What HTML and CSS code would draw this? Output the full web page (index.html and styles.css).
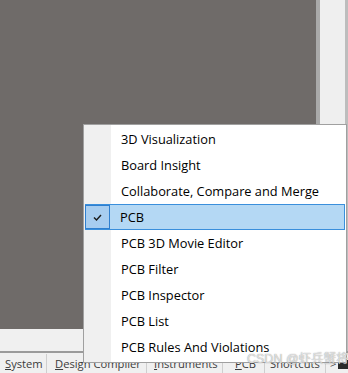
FILE: index.html
```html
<!DOCTYPE html>
<html>
<head>
<meta charset="utf-8">
<link rel="stylesheet" href="styles.css">
</head>
<body>
<div class="app">
  <div class="workspace">
    <div class="main">
      <div class="canvas"></div>
      <div class="lower"></div>
    </div>
    <div class="vscroll"></div>
    <div class="side"></div>
    <div class="edge"></div>
  </div>
  <div class="divider"></div>
  <div class="tabs">
    <span class="tab t-system"><u>S</u>ystem</span>
    <span class="tab t-design"><u>D</u>esign Compiler</span>
    <span class="tab t-instr"><u>I</u>nstruments</span>
    <span class="tab t-pcb"><u>P</u>CB</span>
    <span class="tab t-short">Shortcuts</span>
    <span class="tab t-more">&gt;</span>
    <span class="grip"></span>
  </div>

  <div class="menu">
    <div class="item"><span class="check"></span><span class="label">3D Visualization</span></div>
    <div class="item"><span class="check"></span><span class="label">Board Insight</span></div>
    <div class="item"><span class="check"></span><span class="label">Collaborate, Compare and Merge</span></div>
    <div class="item selected"><span class="check"><svg width="9" height="7" viewBox="0 0 9 7"><path d="M1 3.5 L3.5 6 L8 1" fill="none" stroke="#1a1a1a" stroke-width="1.4"/></svg></span><span class="label">PCB</span></div>
    <div class="item"><span class="check"></span><span class="label">PCB 3D Movie Editor</span></div>
    <div class="item"><span class="check"></span><span class="label">PCB Filter</span></div>
    <div class="item"><span class="check"></span><span class="label">PCB Inspector</span></div>
    <div class="item"><span class="check"></span><span class="label">PCB List</span></div>
    <div class="item"><span class="check"></span><span class="label">PCB Rules And Violations</span></div>
  </div>

  <div class="watermark">CSDN @虾兵蟹将</div>
</div>
</body>
</html>
```

FILE: styles.css
```css
html, body {
  margin: 0;
  padding: 0;
}
body {
  width: 348px;
  height: 373px;
  overflow: hidden;
  background: #f0f0f0;
  font-family: "Open Sans", "Noto Sans", "Noto Sans CJK SC", sans-serif;
}
.app {
  position: relative;
  width: 348px;
  height: 373px;
  display: flex;
  flex-direction: column;
}
.workspace {
  display: flex;
  height: 351px;
}
.main {
  width: 316px;
  display: flex;
  flex-direction: column;
}
.canvas {
  height: 329px;
  background: #6f6b69;
}
.lower {
  flex: 1;
  background: #f0f0f0;
}
.vscroll {
  width: 4px;
  background: #a9a9a9;
}
.side {
  width: 25px;
  background: #efefef;
}
.edge {
  width: 3px;
  background: #bdbdbd;
}
.divider {
  height: 2px;
  background: #9b9b9b;
}
.tabs {
  flex: 1;
  display: flex;
  align-items: flex-end;
  background: #f0f0f0;
  font-size: 11.2px;
  color: #3c3c3c;
  overflow: hidden;
}
.tab {
  box-sizing: border-box;
  border-right: 1px solid #cfcfcf;
  height: 19px;
  line-height: 20px;
  white-space: nowrap;
  overflow: hidden;
  flex-shrink: 0;
}
.t-system { width: 47px; padding-left: 5px; }
.t-design { width: 100px; padding-left: 8px; }
.t-instr { width: 76px; padding-left: 7px; }
.t-pcb { width: 42px; padding-left: 12px; }
.t-short { width: 61px; padding-left: 5px; }
.t-more { width: 12px; padding-left: 4px; border-right: none; }
.grip {
  width: 10px;
  height: 9px;
  background: #2a2a2a;
  margin-bottom: 4px;
  border-radius: 2px 0 0 0;
  flex-shrink: 0;
}
.menu {
  position: absolute;
  left: 83px;
  top: 124px;
  width: 262px;
  padding: 1px 0 2px 0;
  background: linear-gradient(to right, #f0f0f0 0, #f0f0f0 27px, #ffffff 27px);
  border: 1px solid #a0a0a0;
  font-size: 12.8px;
  color: #000;
}
.item {
  display: flex;
  align-items: center;
  height: 26px;
  margin: 0 1px;
  border: 1px solid transparent;
  box-sizing: border-box;
}
.check {
  width: 25px;
  height: 24px;
  display: flex;
  align-items: center;
  justify-content: center;
  box-sizing: border-box;
  flex-shrink: 0;
}
.label {
  padding-left: 10px;
  white-space: nowrap;
  padding-bottom: 1px;
}
.selected {
  background: #b4d8f4;
  border-color: #3a8fdc;
}
.selected .check {
  background: #a7cdf0;
  border: 1px solid #2f7fcf;
  margin-left: -1px;
  height: 24px;
}
.watermark {
  position: absolute;
  left: 247px;
  top: 348px;
  font-size: 12.5px;
  font-family: "Liberation Sans", "Noto Sans CJK SC", sans-serif;
  color: rgba(255, 255, 255, 0.7);
  text-shadow: 0 0 1px rgba(110, 110, 110, 0.9);
  white-space: nowrap;
}
```
